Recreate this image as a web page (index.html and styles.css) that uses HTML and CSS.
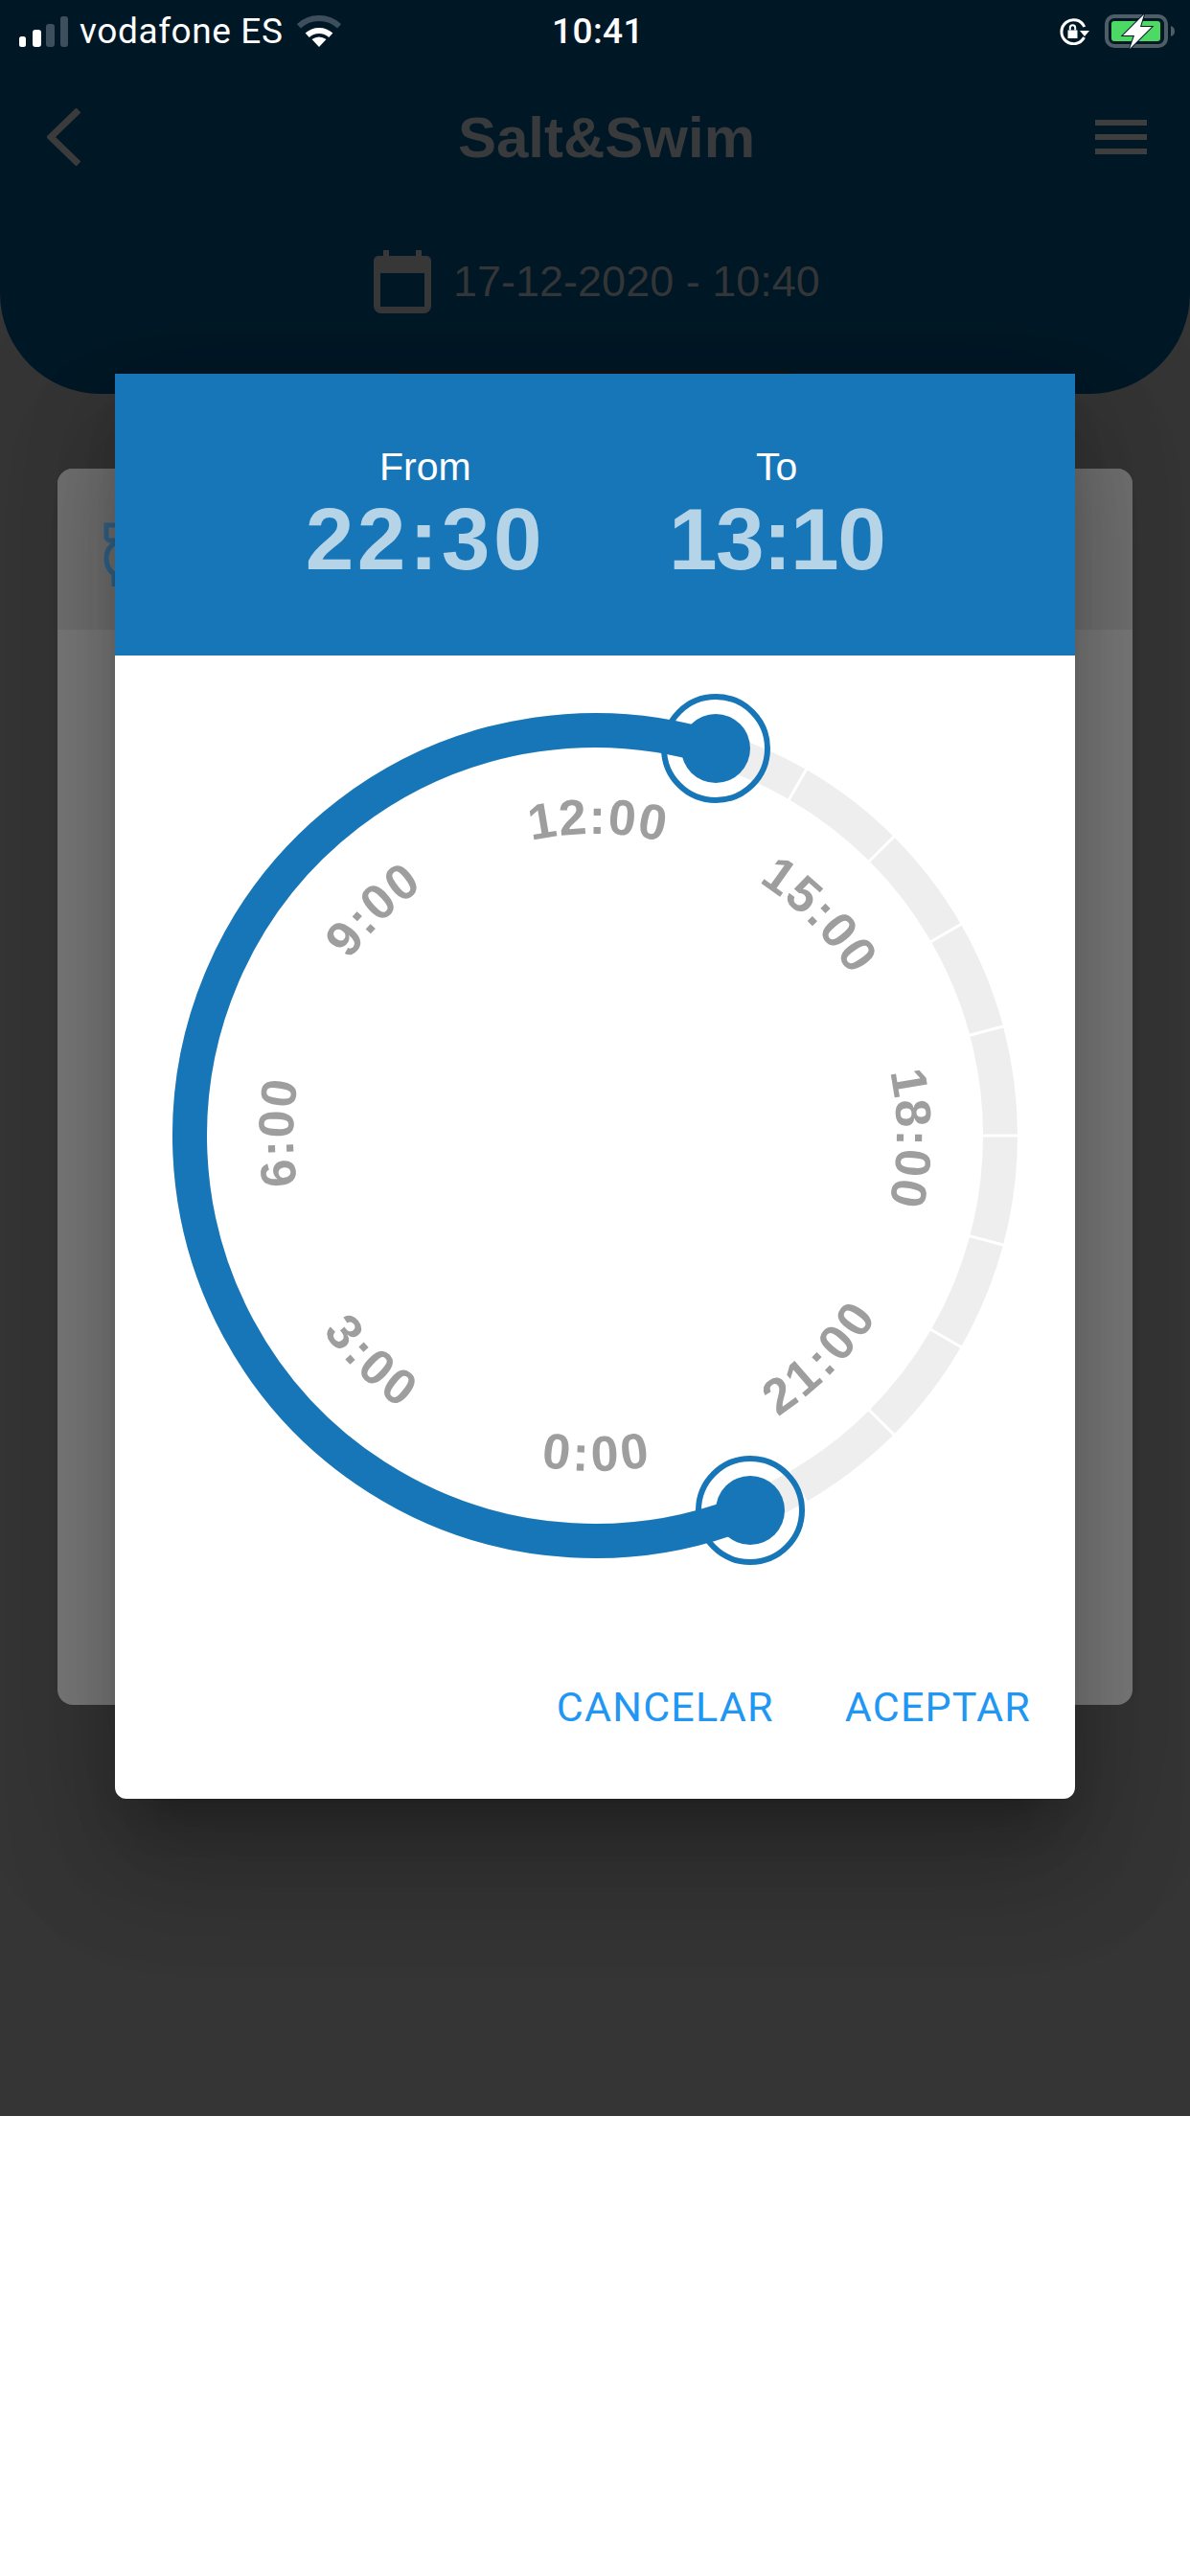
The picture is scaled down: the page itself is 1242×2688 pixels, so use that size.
FILE: index.html
```html
<!DOCTYPE html>
<html lang="en">
<head>
  <meta charset="UTF-8" />
  <meta name="viewport" content="width=device-width, initial-scale=1" />
  <title>Salt&amp;Swim - Time range</title>
  <link rel="stylesheet" href="styles.css">
</head>
<body>
  <div class="screen">
    <header class="app-header">
      <div class="status-bar">
        <div class="status-left">
          <svg class="signal" width="51" height="32" viewBox="0 0 51 32">
            <rect class="on" x="0" y="21" width="7" height="11" rx="2.5" />
            <rect class="on" x="14" y="14" width="9" height="18" rx="3" />
            <rect class="off" x="28" y="8" width="9" height="24" rx="3" />
            <rect class="off" x="43" y="0" width="8" height="32" rx="3" />
          </svg>
          <span class="carrier">vodafone ES</span>
          <svg class="wifi" width="46" height="34" viewBox="0 0 46 34">
            <path class="wifi-far" d="M1.9 11.3A31 31 0 0 1 44.1 11.3" />
            <path class="wifi-near" d="M10.7 20.8A18 18 0 0 1 35.3 20.8" />
            <path class="wifi-dot" d="M23 33L15.5 25Q23 20 30.5 25Z" />
          </svg>
        </div>
        <span class="clock">10:41</span>
        <div class="status-right">
          <svg class="rotation" width="32" height="28" viewBox="0 0 32 28">
            <path class="rotation-ring" d="M25.5 20A12.5 12.5 0 1 1 25.8 9" />
            <path class="rotation-fill" d="M21 13H31L26 19ZM8.5 12.5H18.5V21H8.5Z" />
            <path class="rotation-shackle" d="M10.8 12.5V10A2.7 2.7 0 0 1 16.2 10V12.5" />
          </svg>
          <svg class="battery" width="75" height="36" viewBox="0 0 75 36">
            <rect class="battery-shell" x="2" y="2" width="62" height="31" rx="8" />
            <rect class="battery-level" x="7" y="7" width="51" height="21" rx="3" />
            <path class="battery-nub" d="M69 12C72 13 73 15 73 18C73 20 72 22 69 23Z" />
            <path class="battery-bolt" d="M41 0L19 22H31L26 36L49 13H37Z" />
          </svg>
        </div>
      </div>

      <div class="nav-row">
        <button class="back-btn" aria-label="Back">
          <svg width="36" height="60" viewBox="0 0 36 60"><path d="M33 2L4 30L33 58" /></svg>
        </button>
        <h1>Salt&amp;Swim</h1>
        <button class="menu-btn" aria-label="Menu">
          <span></span><span></span><span></span>
        </button>
      </div>

      <div class="date-row">
        <svg class="calendar" width="60" height="66" viewBox="0 0 60 66">
          <rect class="calendar-tab" x="10" y="0" width="6" height="8" />
          <rect class="calendar-tab" x="44" y="0" width="6" height="8" />
          <rect class="calendar-band" x="0" y="6" width="60" height="18" rx="5" />
          <rect class="calendar-body" x="3.5" y="9.5" width="53" height="53" rx="4" />
        </svg>
        <span class="date-text">17-12-2020 - 10:40</span>
      </div>
    </header>

    <section class="bg-card">
      <div class="bg-card-head">
        <svg width="60" height="70" viewBox="0 0 60 70">
          <path d="M3 3H40V14A4 4 0 0 1 36 19H7A4 4 0 0 1 3 14ZM13 21C6 25 3 30 3 37C3 46 7 52 13 55C26 58 38 50 38 36C38 30 35 25 30 21M11 55L11 67" />
        </svg>
      </div>
    </section>

    <div class="sheet-tab"></div>

    <div class="dialog">
      <div class="dialog-head">
        <div class="range-col">
          <span class="range-label">From</span>
          <span class="range-time">22:30</span>
        </div>
        <div class="range-col">
          <span class="range-label">To</span>
          <span class="range-time range-time-tight">13:10</span>
        </div>
      </div>

      <svg class="dial" width="1002" height="1002" viewBox="0 0 1002 1002">
        <defs>
          <path id="topArc" d="M186 501A315 315 0 0 1 816 501" />
          <path id="bottomArc" d="M151 501A350 350 0 0 0 851 501" />
        </defs>

        <circle class="track" cx="501" cy="501" r="423" pathLength="360" />
        <path class="range-arc" d="M662.9 891.8A423 423 0 1 1 628.2 97.6" />

        <circle class="handle-ring" cx="627" cy="97" r="54" />
        <circle class="handle-dot" cx="627" cy="97" r="36" />
        <circle class="handle-ring" cx="663" cy="892" r="54" />
        <circle class="handle-dot" cx="663" cy="892" r="36" />

        <text class="hour" transform="rotate(0 501 501)"><textPath href="#topArc" startOffset="50.3%">12:00</textPath></text>
        <text class="hour" transform="rotate(45 501 501)"><textPath href="#topArc" startOffset="50.3%">15:00</textPath></text>
        <text class="hour" transform="rotate(90 501 501)"><textPath href="#topArc" startOffset="50.3%">18:00</textPath></text>
        <text class="hour" transform="rotate(-45 501 501)"><textPath href="#topArc" startOffset="50.3%">9:00</textPath></text>
        <text class="hour" transform="rotate(-90 501 501)"><textPath href="#topArc" startOffset="50.3%">6:00</textPath></text>
        <text class="hour hour-inner" transform="rotate(-45 501 501)"><textPath href="#bottomArc" startOffset="50.2%">21:00</textPath></text>
        <text class="hour hour-inner" transform="rotate(0 501 501)"><textPath href="#bottomArc" startOffset="50.2%">0:00</textPath></text>
        <text class="hour hour-inner" transform="rotate(45 501 501)"><textPath href="#bottomArc" startOffset="50.2%">3:00</textPath></text>
      </svg>

      <div class="dialog-actions">
        <button class="text-btn">CANCELAR</button>
        <button class="text-btn">ACEPTAR</button>
      </div>
    </div>
  </div>
</body>
</html>
```

FILE: styles.css
```css
* { box-sizing: border-box; }
body {
  margin: 0;
  background: #fff;
  font-family: "Liberation Sans", Arial, sans-serif;
}
button {
  background: none;
  border: none;
  padding: 0;
  margin: 0;
}
.screen {
  position: relative;
  width: 1242px;
  height: 2208px;
  background: #353535;
  overflow: hidden;
}

/* top header, dimmed by the dialog scrim */
.app-header {
  height: 411px;
  background: #001826;
  border-radius: 0 0 105px 105px;
}
.status-bar {
  display: grid;
  grid-template-columns: 1fr auto 1fr;
  align-items: center;
  height: 47px;
  padding: 11px 14px 0 20px;
  color: #fff;
}
.status-left {
  display: flex;
  align-items: center;
}
.carrier {
  font-family: Roboto, sans-serif;
  font-size: 37px;
  letter-spacing: 0.6px;
  margin: 0 14px 0 12px;
}
.clock {
  font-family: Roboto, sans-serif;
  font-size: 37px;
  font-weight: 500;
  letter-spacing: 0.4px;
}
.status-right {
  display: flex;
  align-items: center;
  justify-content: flex-end;
  gap: 15px;
}
.signal .on { fill: #fff; }
.signal .off { fill: #3d4f5c; }
.wifi-far, .wifi-near { fill: none; stroke-width: 6; }
.wifi-far { stroke: #3d4f5c; }
.wifi-near { stroke: #fff; }
.wifi-dot { fill: #fff; }
.rotation-ring { fill: none; stroke: #fff; stroke-width: 3; }
.rotation-fill { fill: #fff; }
.rotation-shackle { fill: none; stroke: #fff; stroke-width: 2; }
.battery-shell { fill: none; stroke: #4f5d66; stroke-width: 4; }
.battery-level { fill: #4cd964; }
.battery-nub { fill: #4f5d66; }
.battery-bolt {
  fill: #fff;
  stroke: #001826;
  stroke-width: 2;
  paint-order: stroke;
}

.nav-row {
  display: flex;
  align-items: center;
  justify-content: space-between;
  height: 62px;
  margin-top: 65px;
  padding: 0 45px 0 49px;
}
.back-btn {
  display: flex;
  width: 74px;
}
.back-btn path {
  fill: none;
  stroke: #3b3b3b;
  stroke-width: 7;
}
h1 {
  margin: 0;
  font-size: 60px;
  font-weight: 700;
  color: #383a3c;
}
.menu-btn {
  display: flex;
  flex-direction: column;
  gap: 9px;
  width: 54px;
}
.menu-btn span {
  height: 6px;
  background: #3e3e3e;
}

.date-row {
  display: flex;
  align-items: center;
  gap: 23px;
  margin-top: 87px;
  padding-left: 390px;
}
.calendar-tab, .calendar-band { fill: #383838; }
.calendar-body { fill: none; stroke: #383838; stroke-width: 7; }
.date-text {
  font-size: 45px;
  color: #343638;
}

/* card behind the dialog */
.bg-card {
  height: 1290px;
  margin: 78px 60px 0;
  background: #7b7b7b;
  border-radius: 16px;
  overflow: hidden;
}
.bg-card-head {
  height: 168px;
  padding: 56px 0 0 48px;
  background: #727272;
}
.bg-card-head path {
  fill: none;
  stroke: #33658a;
  stroke-width: 5;
}
.sheet-tab {
  position: absolute;
  left: 412px;
  top: 387px;
  width: 416px;
  height: 8px;
  background: #151515;
  border-radius: 6px 6px 0 0;
}

/* time range dialog */
.dialog {
  position: absolute;
  left: 120px;
  top: 390px;
  width: 1002px;
  height: 1487px;
  display: flex;
  flex-direction: column;
  background: #fff;
  border-radius: 0 0 12px 12px;
  box-shadow: 0 72px 114px 9px rgba(0,0,0,0.16), 0 27px 138px 24px rgba(0,0,0,0.14), 0 33px 45px -21px rgba(0,0,0,0.24);
}
.dialog-head {
  display: flex;
  justify-content: center;
  gap: 129px;
  height: 294px;
  padding-top: 72px;
  background: #1676b7;
}
.range-col {
  display: flex;
  flex-direction: column;
  align-items: center;
}
.range-label {
  font-size: 41px;
  line-height: 50px;
  color: #fff;
}
.range-time {
  font-size: 91px;
  line-height: 102px;
  font-weight: 700;
  letter-spacing: 3.5px;
  color: #b5d4e8;
}
.range-time-tight { letter-spacing: -1.5px; }
.dial {
  display: block;
  flex: none;
}
.track {
  fill: none;
  stroke: #eee;
  stroke-width: 36;
  stroke-dasharray: 14.6 0.4;
  stroke-dashoffset: -0.2;
}
.range-arc {
  fill: none;
  stroke: #1676b7;
  stroke-width: 36;
}
.handle-ring {
  fill: none;
  stroke: #1676b7;
  stroke-width: 6;
}
.handle-dot { fill: #1676b7; }
.hour {
  font-size: 52px;
  font-weight: 700;
  letter-spacing: 1.5px;
  fill: #9e9e9e;
  text-anchor: middle;
}
.hour-inner { letter-spacing: 3.5px; }
.dialog-actions {
  display: flex;
  justify-content: flex-end;
  gap: 74px;
  padding: 70px 46px 0 0;
}
.text-btn {
  font-family: Roboto, sans-serif;
  font-size: 43px;
  line-height: 50px;
  letter-spacing: 1.2px;
  color: #2196f3;
}
```
